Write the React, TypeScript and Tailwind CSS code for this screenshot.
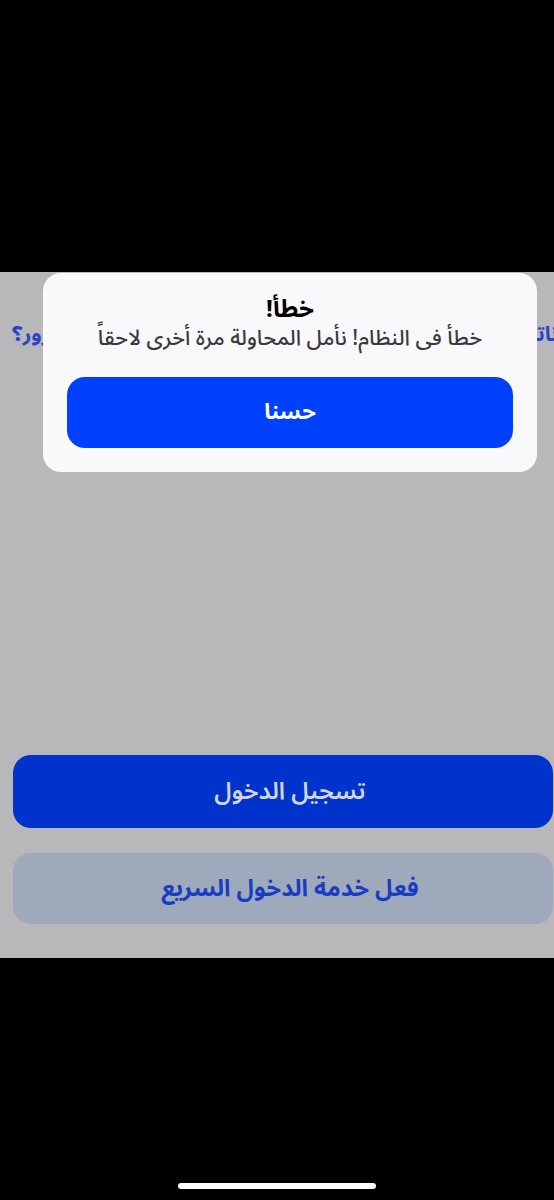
const font = { fontFamily: '"Noto Sans Arabic", "DejaVu Sans", "Noto Sans", sans-serif' };

export default function App() {
  return (
    <div className="w-[554px] h-[1200px] bg-black flex flex-col overflow-hidden" style={font} dir="rtl">
      <div className="h-[272px] shrink-0 bg-black" />

      <div className="relative h-[686px] shrink-0 bg-[#b8b7ba] flex flex-col">
        <div className="mt-[50px] h-[26px] flex items-center justify-between text-[21px] font-bold text-[#2a45c8] whitespace-nowrap">
          <span className="mr-[-70px]">تذكر بياناتي</span>
          <span className="ml-[12px]">نسيت كلمة المرور؟</span>
        </div>

        <div className="mt-[407px] ml-[13px] mr-[1px] h-[73px] rounded-[18px] bg-[#0033cc] flex items-center justify-center pl-[14px] text-[24px] font-semibold text-[#d3d3de]">
          تسجيل الدخول
        </div>
        <div className="mt-[25px] ml-[13px] mr-[1px] h-[71px] rounded-[18px] bg-[#9eaabb] flex items-center justify-center pl-[14px] text-[23.5px] font-bold text-[#1a3cc4]">
          فعل خدمة الدخول السريع
        </div>

        <div className="absolute top-[1px] left-[43px] w-[494px] rounded-[18px] bg-[#f9f9fb] flex flex-col items-center pt-[22px] pb-[24px] px-[24px]">
          <div className="h-[30px] leading-[30px] text-[24px] font-bold text-black">خطأ!</div>
          <div className="h-[26px] leading-[26px] text-[21.5px] font-medium text-[#3a3a3e] whitespace-nowrap">
            خطأ فى النظام! نأمل المحاولة مرة أخرى لاحقاً
          </div>
          <div className="mt-[26px] w-full h-[71px] rounded-[18px] bg-[#0040ff] flex items-center justify-center text-[22px] font-bold text-white">
            حسنا
          </div>
        </div>
      </div>

      <div className="flex-1 bg-black flex flex-col items-center">
        <div className="mt-[225px] w-[198px] h-[6px] rounded-full bg-white" />
      </div>
    </div>
  );
}
